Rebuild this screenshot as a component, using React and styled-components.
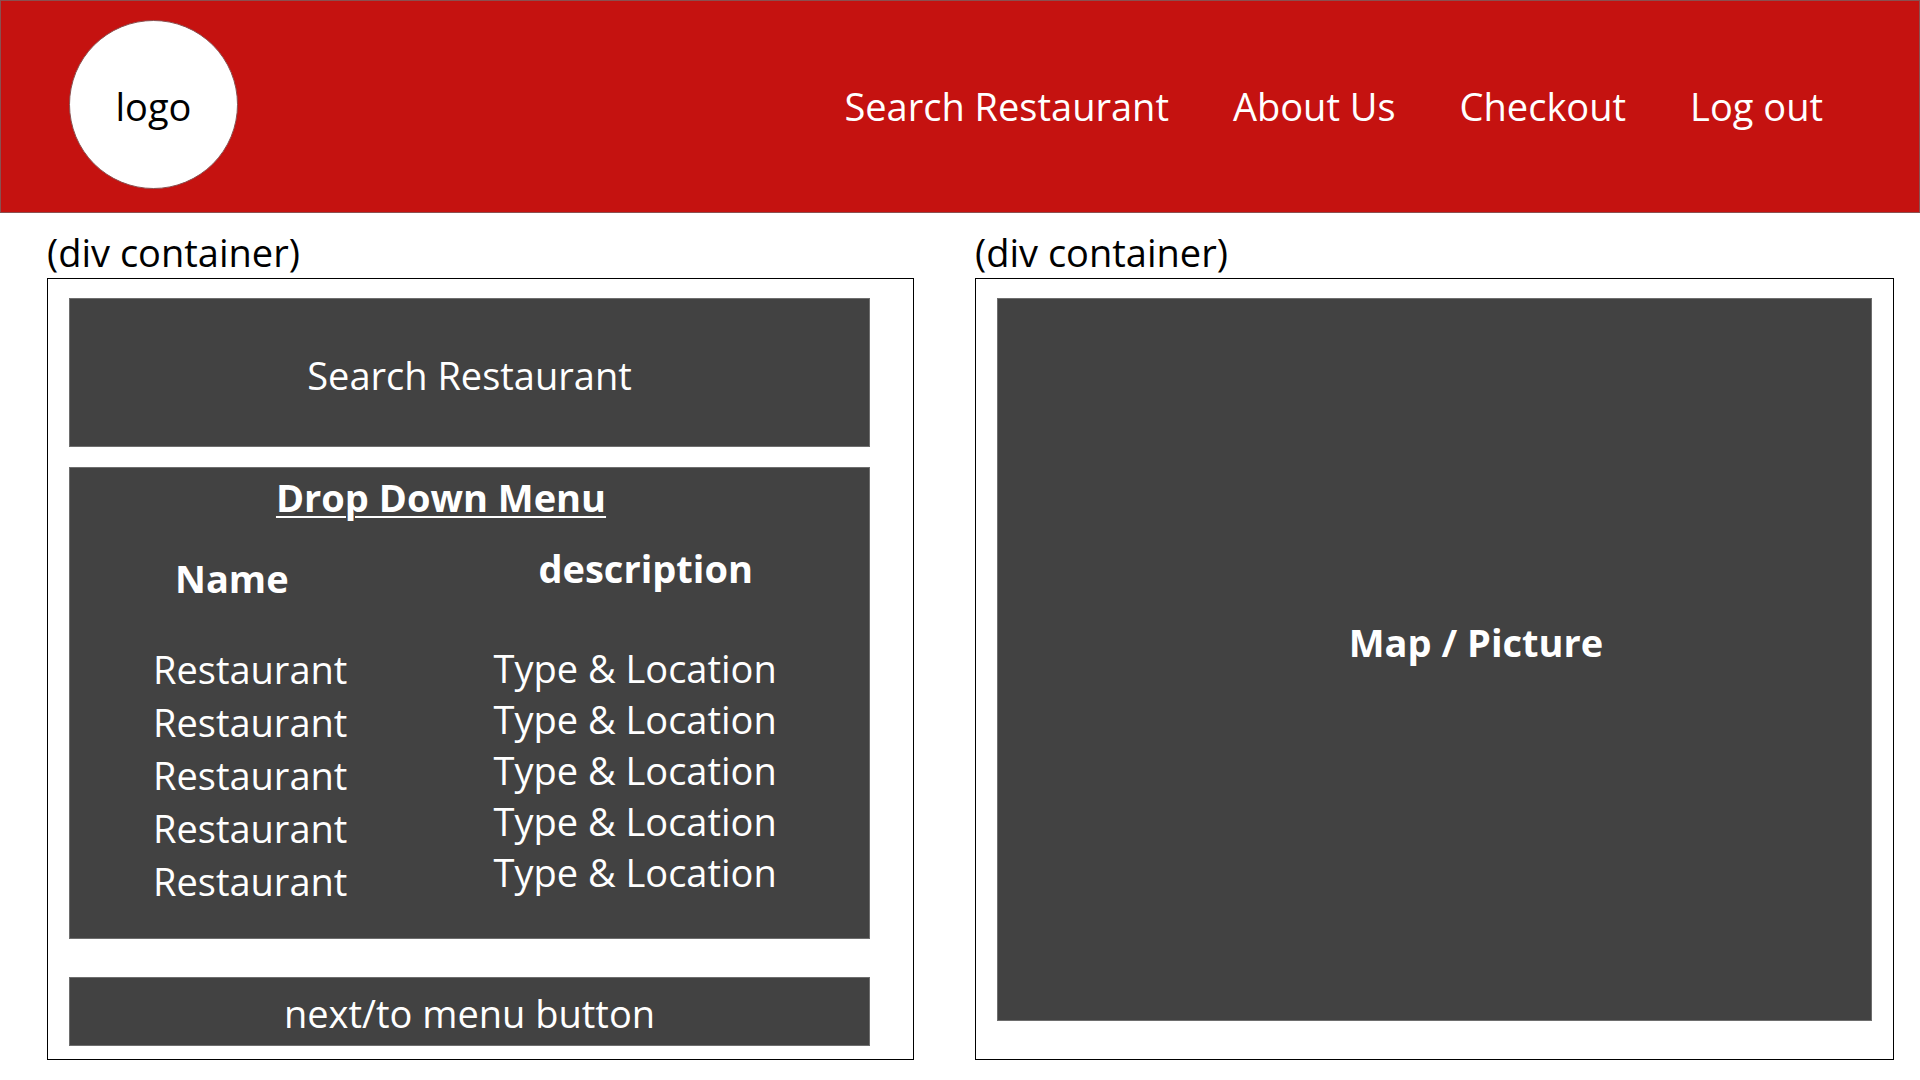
import React from "react";
import styled, { createGlobalStyle } from "styled-components";

const GlobalStyle = createGlobalStyle`
  *, *::before, *::after { box-sizing: border-box; }
  body {
    margin: 0;
    background: #fff;
    color: #000;
    font: 400 38px/51px "Open Sans", "Noto Sans", sans-serif;
  }
  h1, h2, ul { margin: 0; padding: 0; }
`;

const Header = styled.header`
  display: flex;
  align-items: center;
  justify-content: space-between;
  padding: 19px 96px 23px 68px;
  background: #c51210;
  border: 1px solid #8a5050;
`;

const Logo = styled.a`
  display: flex;
  align-items: center;
  justify-content: center;
  width: 169px;
  height: 169px;
  padding-top: 4px;
  border: 1px solid #8a5050;
  border-radius: 50%;
  background: #fff;
  color: #000;
  text-decoration: none;
`;

const Nav = styled.nav`
  display: flex;
  gap: 64px;
  padding-top: 4px;
`;

const NavLink = styled.a`
  color: #fff;
  text-decoration: none;
  white-space: nowrap;
`;

const Main = styled.main`
  display: grid;
  grid-template-columns: 867fr 919fr;
  gap: 61px;
  padding: 14px 26px 20px 47px;
`;

const Column = styled.section`
  display: flex;
  flex-direction: column;
  min-width: 0;
`;

const Caption = styled.h2`
  font: inherit;
`;

const Panel = styled.div`
  display: flex;
  flex: 1;
  flex-direction: column;
  padding: ${(p) => p.$padding};
  border: 1px solid #000;
`;

const tile = `
  width: 100%;
  border: 1px solid #6e6e6e;
  border-radius: 0;
  background: #424242;
  color: #fff;
  font: inherit;
`;

const SearchBox = styled.input`
  ${tile}
  height: 149px;
  padding: 4px 20px 0;
  text-align: center;
  &::placeholder { color: #fff; opacity: 1; }
`;

const Menu = styled.div`
  ${tile}
  margin: 20px 0 38px;
  padding: 4px 0 30px;
`;

const MenuTitle = styled.h2`
  padding-right: 57px;
  font-size: 38px;
  font-weight: 700;
  text-align: center;
  text-decoration: underline;
  text-decoration-thickness: 2px;
  text-underline-offset: 4px;
`;

const MenuTable = styled.table`
  width: 100%;
  border-collapse: collapse;
  table-layout: fixed;
`;

const HeadCell = styled.th`
  width: ${(p) => p.$width};
  height: 120px;
  padding: ${(p) => p.$padding};
  font-weight: 700;
  text-align: left;
  vertical-align: top;
`;

const ListCell = styled.td`
  padding: 0 0 0 ${(p) => p.$indent};
  vertical-align: top;
`;

const List = styled.ul`
  list-style: none;
  line-height: ${(p) => p.$line};
`;

const NextButton = styled.button`
  ${tile}
  height: 69px;
  padding: 4px 20px 0;
  cursor: pointer;
`;

const Picture = styled.div`
  ${tile}
  display: flex;
  flex: 1;
  align-items: center;
  justify-content: center;
  padding: 0 0 34px 83px;
  font-weight: 700;
`;

const links = ["Search Restaurant", "About Us", "Checkout", "Log out"];
const rows = [1, 2, 3, 4, 5];

export default function App() {
  return (
    <>
      <GlobalStyle />
      <Header>
        <Logo href="#home">logo</Logo>
        <Nav>
          {links.map((label) => (
            <NavLink key={label} href="#">{label}</NavLink>
          ))}
        </Nav>
      </Header>
      <Main>
        <Column>
          <Caption>(div container)</Caption>
          <Panel $padding="19px 43px 13px 21px">
            <SearchBox type="text" placeholder="Search Restaurant" aria-label="Search Restaurant" />
            <Menu>
              <MenuTitle>Drop Down Menu</MenuTitle>
              <MenuTable>
                <thead>
                  <tr>
                    <HeadCell scope="col" $width="53%" $padding="30px 0 0 105px">Name</HeadCell>
                    <HeadCell scope="col" $width="47%" $padding="20px 0 0 45px">description</HeadCell>
                  </tr>
                </thead>
                <tbody>
                  <tr>
                    <ListCell $indent="83px">
                      <List $line="53px">
                        {rows.map((n) => <li key={n}>Restaurant</li>)}
                      </List>
                    </ListCell>
                    <ListCell $indent="0">
                      <List $line="51px">
                        {rows.map((n) => <li key={n}>Type &amp; Location</li>)}
                      </List>
                    </ListCell>
                  </tr>
                </tbody>
              </MenuTable>
            </Menu>
            <NextButton type="button">next/to menu button</NextButton>
          </Panel>
        </Column>
        <Column>
          <Caption>(div container)</Caption>
          <Panel $padding="19px 21px 38px">
            <Picture>Map / Picture</Picture>
          </Panel>
        </Column>
      </Main>
    </>
  );
}
